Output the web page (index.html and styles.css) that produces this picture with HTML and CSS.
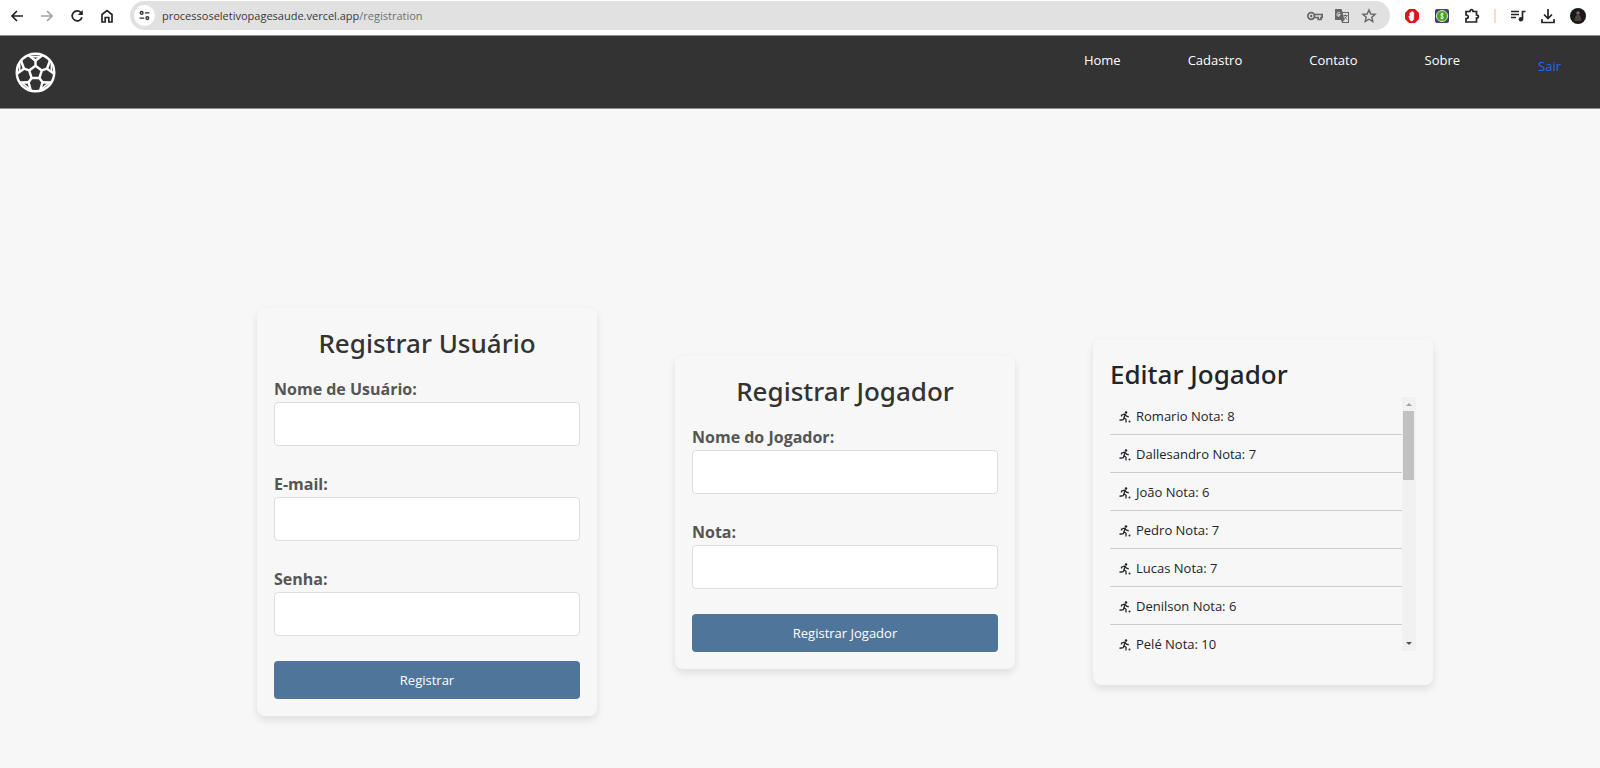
FILE: index.html
```html
<!DOCTYPE html>
<html lang="pt-BR">
<head>
<meta charset="utf-8">
<title>Cadastro</title>
<meta name="viewport" content="width=device-width, initial-scale=1">
<link rel="stylesheet" href="styles.css">
</head>
<body>
<svg class="symbols" aria-hidden="true">
  <symbol id="runner" viewBox="0 0 24 24">
    <circle cx="14" cy="3" r="2.500"/>
    <path d="M5 11V8.500L10.500 6.500L13 7.500L15 10.500L19.500 11.500M12 7.500L10 13.500L14 16.500V23M10 13.500L8.500 17.500L1 18.500" fill="none" stroke="currentColor" stroke-width="2.600"/>
    <circle cx="21" cy="21" r="2"/>
  </symbol>
</svg>

<div class="browser">
  <div class="browser-nav">
    <button class="tool" aria-label="Voltar"><svg viewBox="0 0 16 16"><path class="line" d="M14 8H3M8 3L3 8l5 5"/></svg></button>
    <button class="tool tool-off" aria-label="Avançar"><svg viewBox="0 0 16 16"><path class="line" d="M2 8h11M8 3l5 5-5 5"/></svg></button>
    <button class="tool" aria-label="Recarregar"><svg viewBox="0 0 16 16"><path class="line" d="M13 9.2A5 5 0 1 1 12 4.6L13.2 6"/><path d="M13.8 2v5H8.8z"/></svg></button>
    <button class="tool" aria-label="Início"><svg viewBox="0 0 16 16"><path class="line" d="M3 6.500L8 2.600l5 3.900V14H9.800V9.500H6.200V14H3z"/></svg></button>
  </div>
  <div class="address">
    <button class="site-info" aria-label="Informações do site"><svg viewBox="0 0 16 16"><circle class="line" cx="4.500" cy="4.800" r="1.700"/><path class="line" d="M8.500 4.800H14M2 11.200h5.500"/><circle class="line" cx="11.500" cy="11.200" r="1.700"/></svg></button>
    <span class="url">processoseletivopagesaude.vercel.app<span class="path">/registration</span></span>
    <div class="address-tools">
      <button class="tool" aria-label="Senhas"><svg viewBox="0 0 16 16"><circle class="line" cx="4.200" cy="8" r="3.300"/><circle cx="4.200" cy="8" r="1.200"/><path class="line" d="M7.200 6.500H15.200V9.500H14V11.500H11.200V9.500H7.200"/></svg></button>
      <button class="tool" aria-label="Traduzir"><svg viewBox="0 0 16 16"><path d="M1 1h6.500l1 3H15v11H8l-1-3H1z"/><path d="M8.700 5H14v9H8.500l2-2z" fill="#e1e1e1"/><path d="M6.500 6.500H4.500v1h1C5 9 3 8.500 3 6.500S5 4 6 5" fill="none" stroke="#e1e1e1"/><path d="M9.500 7.500h4M11.500 6.500v1M12.800 7.500c-.5 2-2 3-3 3.800M10.300 8.500l2.700 3" fill="none" stroke="currentColor"/></svg></button>
      <button class="tool" aria-label="Favoritar"><svg viewBox="0 0 16 16"><path class="line thin" d="M8 2l1.800 4 4.300.4-3.300 2.800 1 4.300L8 11.200l-3.800 2.300 1-4.300L1.900 6.400 6.200 6z"/></svg></button>
    </div>
  </div>
  <div class="extensions">
    <button class="tool" aria-label="Bloqueador"><svg viewBox="0 0 16 16"><path d="M5 1h6l4 4v6l-4 4H5l-4-4V5z" fill="#d9151c"/><path d="M4.800 8l1 1V5h1v3-4h1v4-4.500h1V8V4.500h1V10c0 2-.8 3-2.300 3S5.500 11.500 4.800 8z" fill="#fff" stroke="#fff" stroke-width=".4"/></svg></button>
    <button class="tool" aria-label="Economia"><svg viewBox="0 0 16 16"><rect x="1" y="1" width="14" height="14" rx="2" fill="#4c3d78"/><circle cx="8" cy="8" r="5.500" fill="#41a51c" stroke="#d9efd0"/><path d="M9.700 6.300C9 5.300 6.800 5.500 6.800 6.800S9.500 7.900 9.400 9.300 7 10.700 6.300 9.700M8 4.500v7" fill="none" stroke="#fff" stroke-width=".9"/></svg></button>
    <button class="tool" aria-label="Extensões"><svg viewBox="0 0 16 16"><path class="line" d="M2 3.500H6C6 1 9 1 9 3.500H12.500V7C15 7 15 10 12.500 10V14H2V10.500C5 10.500 5 7 2 7z"/></svg></button>
    <span class="divider"></span>
    <button class="tool" aria-label="Mídia"><svg viewBox="0 0 16 16"><path class="line" d="M1 3.500h8M1 6.500h8M1 9.500h5M12.500 11.500V3.500H15.500"/><circle cx="10.900" cy="11.300" r="2.200"/></svg></button>
    <button class="tool" aria-label="Downloads"><svg viewBox="0 0 16 16"><path class="line" d="M8 1v9M4 6.500l4 4 4-4M2 11v3.500h12V11"/></svg></button>
    <button class="tool" aria-label="Perfil"><svg viewBox="0 0 16 16"><circle cx="8" cy="8" r="8" fill="#17191b"/><path d="M4.500 13C5 9 5.500 7 8 6.800c2.500.2 3 2.700 3.500 6.200z" fill="#4f433b"/><circle cx="8" cy="5" r="1.800" fill="#806352"/></svg></button>
  </div>
</div>

<header class="header">
  <a class="logo" href="#" aria-label="Página inicial">
    <svg viewBox="0 0 40 40" fill="none" stroke="#fff" stroke-width="2.400" stroke-linejoin="round">
      <circle cx="20" cy="20" r="18.300"/>
      <path d="M20 13.500l6.200 4.500-2.400 7.300h-7.600L13.800 18z"/>
      <path d="M20 13.500V8.500M26.200 18l5-1.700M23.800 25.300l3 4.200M16.200 25.300l-3 4.200M13.800 18l-5-1.700"/>
      <path d="M13.100 3L20 8.500L26.900 3M34.200 8.100L31.200 16.300L38.200 21.300M35.700 29.800L26.800 29.500L24.500 37.800M4.300 29.800L13.200 29.500L15.500 37.800M5.800 8.100L8.800 16.300L1.800 21.300"/>
      <path d="M15 4.500h10M35.500 11v8M4.500 11v8M33 30l-7 6M7 30l7 6" stroke-width="1.600"/>
    </svg>
  </a>
  <nav class="menu">
    <a href="#">Home</a>
    <a href="#">Cadastro</a>
    <a href="#">Contato</a>
    <a href="#">Sobre</a>
    <a class="logout" href="#">Sair</a>
  </nav>
</header>

<main class="panels">
  <form class="card">
    <h2 class="card-title">Registrar Usuário</h2>
    <div class="field"><label for="username">Nome de Usuário:</label><input id="username" type="text"></div>
    <div class="field"><label for="email">E-mail:</label><input id="email" type="email"></div>
    <div class="field"><label for="password">Senha:</label><input id="password" type="password"></div>
    <button class="submit" type="submit">Registrar</button>
  </form>

  <form class="card">
    <h2 class="card-title">Registrar Jogador</h2>
    <div class="field"><label for="player">Nome do Jogador:</label><input id="player" type="text"></div>
    <div class="field"><label for="score">Nota:</label><input id="score" type="text"></div>
    <button class="submit" type="submit">Registrar Jogador</button>
  </form>

  <section class="card card-edit">
    <h2 class="card-title">Editar Jogador</h2>
    <div class="scroller">
      <ul class="players">
        <li><svg><use href="#runner"/></svg>Romario Nota: 8</li>
        <li><svg><use href="#runner"/></svg>Dallesandro Nota: 7</li>
        <li><svg><use href="#runner"/></svg>João Nota: 6</li>
        <li><svg><use href="#runner"/></svg>Pedro Nota: 7</li>
        <li><svg><use href="#runner"/></svg>Lucas Nota: 7</li>
        <li><svg><use href="#runner"/></svg>Denilson Nota: 6</li>
        <li><svg><use href="#runner"/></svg>Pelé Nota: 10</li>
      </ul>
      <div class="track" aria-hidden="true">
        <svg viewBox="0 0 14 14"><path d="M4 9h6L7 6z" fill="#a0a0a0"/></svg>
        <span class="thumb"></span>
        <svg viewBox="0 0 14 14"><path d="M4 5h6L7 8z" fill="#505050"/></svg>
      </div>
    </div>
  </section>
</main>
</body>
</html>
```
FILE: styles.css
```css
* {
  box-sizing: border-box;
}

body {
  margin: 0;
  min-height: 100vh;
  background: #f7f7f7;
  color: #212529;
  font-family: "Open Sans", "Noto Sans", sans-serif;
  font-size: 13px;
  line-height: 20px;
  overflow: hidden;
}

button {
  font: inherit;
  border: 0;
  cursor: pointer;
}

a {
  text-decoration: none;
}

.symbols {
  display: none;
}

/* Browser bar */
.browser {
  display: flex;
  align-items: center;
  height: 35px;
  padding: 0 14px 4px 9px;
  background: #fff;
}

.browser-nav {
  display: flex;
  gap: 14px;
  margin-right: 15px;
}

.tool {
  display: flex;
  padding: 0;
  background: none;
  color: #252525;
}

.tool svg {
  width: 16px;
  height: 16px;
  fill: currentColor;
}

.tool-off {
  color: #a5a5a5;
}

svg .line {
  fill: none;
  stroke: currentColor;
  stroke-width: 1.7;
}

svg .thin {
  stroke-width: 1.4;
}

.address {
  flex: 1;
  display: flex;
  align-items: center;
  height: 29px;
  padding: 0 13px 0 4px;
  border-radius: 15px;
  background: #e1e1e1;
}

.site-info {
  display: flex;
  padding: 4px;
  border-radius: 50%;
  background: #fff;
  color: #333;
}

.site-info svg {
  width: 13px;
  height: 13px;
}

.url {
  margin-left: 7px;
  font-size: 11px;
  color: #3a3a3a;
}

.path {
  color: #707070;
}

.address-tools {
  display: flex;
  gap: 11px;
  margin-left: auto;
}

.address-tools .tool {
  color: #666;
}

.extensions {
  display: flex;
  align-items: center;
  gap: 14px;
  margin-left: 14px;
}

.divider {
  width: 2px;
  height: 14px;
  background: #f8dccb;
}

/* Site header */
.header {
  display: flex;
  justify-content: space-between;
  height: 74px;
  padding: 14px 39px 14px 15px;
  border-top: 1px solid #8c8c8c;
  border-bottom: 1px solid #8c8c8c;
  background: #333;
}

.logo {
  display: flex;
  align-items: center;
}

.logo svg {
  width: 41px;
  height: 41px;
}

.menu {
  display: flex;
  align-items: flex-start;
  gap: 67px;
}

.menu a {
  color: #fff;
}

.menu .logout {
  padding: 6px 0 0 11px;
  color: #1a6df0;
}

/* Cards */
.panels {
  display: flex;
  align-items: center;
  gap: 78px;
  padding: 199px 167px 0 257px;
}

.card {
  flex: 1;
  padding: 17px;
  border-radius: 8px;
  background: #f7f7f7;
  box-shadow: 0 4px 8px rgba(0, 0, 0, 0.1);
}

.card-title {
  margin: 0 0 17px;
  color: #333;
  font-family: "Noto Sans", "Open Sans", sans-serif;
  font-size: 26px;
  font-weight: 500;
  line-height: 36px;
  margin-bottom: 15px;
  text-align: center;
}

.field {
  margin-bottom: 25px;
}

.field label {
  display: block;
  color: #555;
  font-size: 16px;
  font-weight: 700;
  line-height: 26px;
}

.field input {
  display: block;
  width: 100%;
  height: 44px;
  padding: 8px;
  border: 1px solid #ddd;
  border-radius: 4px;
  background: #fff;
  font: inherit;
}

.submit {
  display: block;
  width: 100%;
  padding: 9px;
  border-radius: 4px;
  background: #4f759b;
  color: #fff;
}

.card-edit {
  padding-bottom: 34px;
}

.card-edit .card-title {
  margin-bottom: 5px;
  color: #212529;
  text-align: left;
}

.scroller {
  display: flex;
  height: 254px;
}

.players {
  flex: 1;
  margin: 0;
  padding: 0;
  overflow: hidden;
  list-style: none;
}

.players li {
  display: flex;
  align-items: center;
  gap: 5px;
  height: 38px;
  padding-left: 9px;
  border-bottom: 1px solid #ccc;
}

.players svg {
  width: 12px;
  height: 12px;
  margin-top: 2px;
  fill: currentColor;
}

.track {
  display: flex;
  flex-direction: column;
  width: 14px;
  background: #f1f1f1;
}

.track svg {
  height: 14px;
}

.thumb {
  height: 69px;
  margin: 0 2px auto 1px;
  background: #c1c1c1;
}
```
